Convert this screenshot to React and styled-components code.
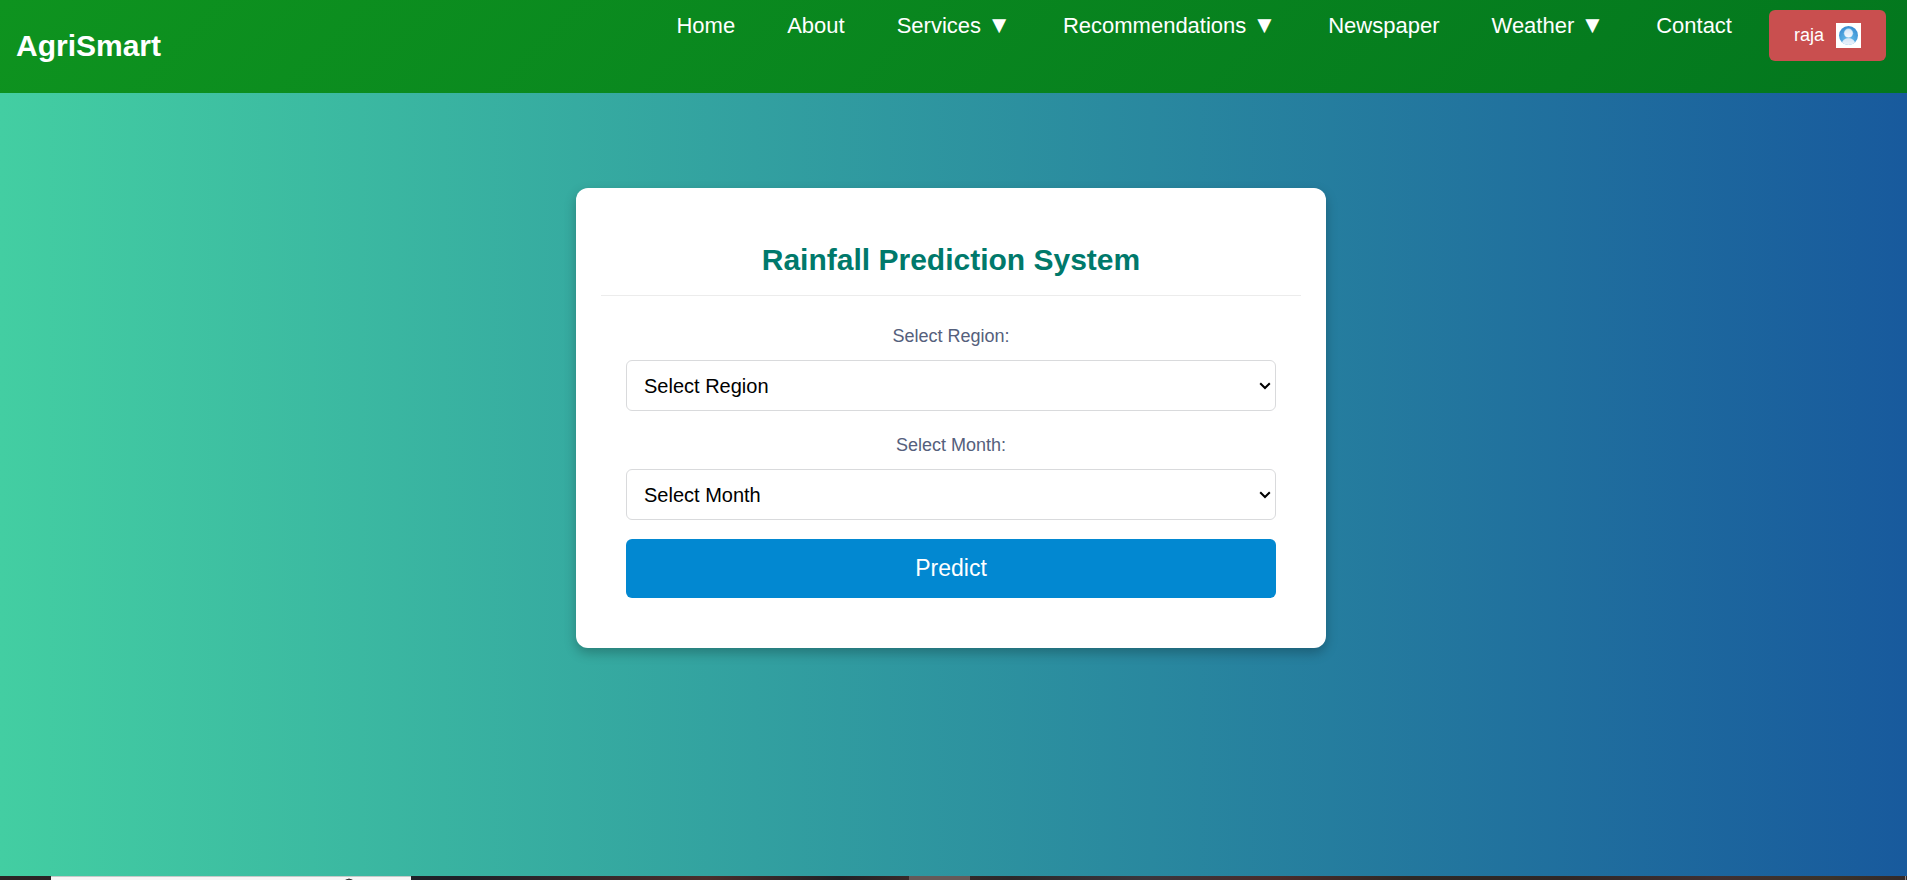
import React from "react";
import styled, { createGlobalStyle } from "styled-components";

const GlobalStyle = createGlobalStyle`
  *, *::before, *::after { box-sizing: border-box; }
  body {
    margin: 0;
    font-family: "Liberation Sans", Arial, "DejaVu Sans", sans-serif;
  }
`;

const Page = styled.div`
  display: flex;
  flex-direction: column;
  min-height: 100vh;
  background: linear-gradient(to right, #43cea2, #185a9d);
`;

const Header = styled.header`
  display: flex;
  align-items: flex-start;
  justify-content: space-between;
  min-height: 93px;
  padding: 10px 21px 12px 16px;
  background: linear-gradient(135deg, #0e931f, #03771e);
  color: #fff;
`;

const Brand = styled.a`
  align-self: center;
  color: inherit;
  font-size: 30px;
  font-weight: 700;
  line-height: 36px;
  text-decoration: none;
`;

const Nav = styled.nav`
  display: flex;
  align-items: flex-start;
  gap: 37px;
`;

const NavList = styled.ul`
  display: flex;
  gap: 52px;
  margin: 0;
  padding: 3px 0 0;
  list-style: none;
`;

const NavLink = styled.a`
  display: block;
  color: #fff;
  font-size: 22px;
  line-height: 26px;
  text-decoration: none;
  white-space: nowrap;
`;

const Arrow = styled.span`
  font-size: 24px;
  line-height: 20px;
`;

const UserButton = styled.button`
  display: flex;
  align-items: center;
  gap: 12px;
  height: 51px;
  padding: 0 25px;
  border: 0;
  border-radius: 6px;
  background: #c94f4f;
  color: #fff;
  font-family: inherit;
  font-size: 18px;
  cursor: pointer;
`;

const Main = styled.main`
  display: flex;
  flex: 1;
  align-items: flex-start;
  justify-content: center;
  padding: 95px 5px 95px 0;
`;

const Card = styled.section`
  width: 750px;
  max-width: 100%;
  padding: 50px 25px;
  border-radius: 12px;
  background: #fff;
  box-shadow: 0 5px 12px rgba(0, 0, 0, 0.25);
`;

const Title = styled.h1`
  margin: 0;
  padding: 4px 0 17px;
  border-bottom: 1px solid #ececec;
  color: #00796b;
  font-size: 30px;
  line-height: 36px;
  text-align: center;
`;

const Form = styled.form`
  display: flex;
  flex-direction: column;
  gap: 19px;
  padding: 25px 25px 0;
`;

const Field = styled.div`
  display: flex;
  flex-direction: column;
  gap: 12px;
`;

const Label = styled.label`
  padding-top: 3px;
  color: #55607c;
  font-size: 18px;
  line-height: 24px;
  text-align: center;
`;

const SelectBox = styled.div`
  position: relative;
  display: flex;
`;

const Select = styled.select`
  appearance: none;
  width: 100%;
  height: 51px;
  padding: 0 17px;
  border: 1px solid #d9dadc;
  border-radius: 6px;
  background: #fff;
  color: #000;
  font-family: inherit;
  font-size: 20px;
`;

const Chevron = styled.svg`
  position: absolute;
  top: 22px;
  right: 5px;
  pointer-events: none;
`;

const SubmitButton = styled.button`
  height: 59px;
  border: 0;
  border-radius: 6px;
  background: #0288d1;
  color: #fff;
  font-family: inherit;
  font-size: 23px;
  cursor: pointer;
`;

const Taskbar = styled.footer`
  display: flex;
  height: 4px;
  padding-left: 51px;
  background: linear-gradient(to right, #2b2425, #1d2128 24%, #4a2e2c 37%, #1f2226 44%, #3b2a29 48%, #2b292b 53%, #3a363d 60%, #4a2c2b 67%, #2d2926 74%, #2f2727 82%, #3f3032 90%, #3b332a 96%, #332a2b);
`;

const SearchEdge = styled.div`
  display: flex;
  justify-content: flex-end;
  width: 360px;
  padding-right: 57px;
  border-top: 1px solid #c5cac9;
  background: #f6f6f6;
`;

const ActiveEdge = styled.div`
  width: 61px;
  margin-left: 498px;
  background: #645a59;
`;

const DesktopEdge = styled.div`
  width: 1px;
  margin: 0 1px 0 auto;
  background: #8e8988;
`;

function Avatar() {
  return (
    <svg width="25" height="25" viewBox="0 0 25 25" aria-hidden="true">
      <defs>
        <radialGradient id="sky" cx="0.5" cy="0.75" r="0.7">
          <stop offset="0" stopColor="#69c1ed" />
          <stop offset="1" stopColor="#3a8fd3" />
        </radialGradient>
        <linearGradient id="person" x1="0" y1="0" x2="0" y2="1">
          <stop offset="0" stopColor="#d3e5f6" />
          <stop offset="1" stopColor="#f8fbfe" />
        </linearGradient>
        <clipPath id="disc">
          <circle cx="12.5" cy="12.5" r="9.5" />
        </clipPath>
      </defs>
      <rect width="25" height="25" fill="#fff" />
      <circle cx="12.5" cy="12.5" r="9.5" fill="url(#sky)" />
      <g clipPath="url(#disc)" fill="url(#person)">
        <ellipse cx="12.5" cy="20.5" rx="6.6" ry="5.4" />
        <circle cx="12.5" cy="10.2" r="4.6" stroke="#5aaee2" strokeWidth="0.4" />
      </g>
    </svg>
  );
}

const links = [
  { text: "Home" },
  { text: "About" },
  { text: "Services", menu: true },
  { text: "Recommendations", menu: true },
  { text: "Newspaper" },
  { text: "Weather", menu: true },
  { text: "Contact" },
];

const regions = ["North", "South", "East", "West"];
const months = [
  "January", "February", "March", "April", "May", "June",
  "July", "August", "September", "October", "November", "December",
];

function SelectField({ id, label, placeholder, options }) {
  return (
    <Field>
      <Label htmlFor={id}>{label}</Label>
      <SelectBox>
        <Select id={id} name={id} defaultValue="">
          <option value="">{placeholder}</option>
          {options.map((option) => (
            <option key={option} value={option}>{option}</option>
          ))}
        </Select>
        <Chevron width="12" height="8" viewBox="0 0 12 8" aria-hidden="true">
          <path d="M1.2 1.2L6 6L10.8 1.2" fill="none" stroke="#000" strokeWidth="2" />
        </Chevron>
      </SelectBox>
    </Field>
  );
}

export default function App() {
  return (
    <Page>
      <GlobalStyle />
      <Header>
        <Brand href="#">AgriSmart</Brand>
        <Nav>
          <NavList>
            {links.map(({ text, menu }) => (
              <li key={text}>
                <NavLink href="#">
                  {text}
                  {menu && <> <Arrow>▼</Arrow></>}
                </NavLink>
              </li>
            ))}
          </NavList>
          <UserButton type="button">
            raja
            <Avatar />
          </UserButton>
        </Nav>
      </Header>
      <Main>
        <Card>
          <Title>Rainfall Prediction System</Title>
          <Form onSubmit={(event) => event.preventDefault()}>
            <SelectField id="region" label="Select Region:" placeholder="Select Region" options={regions} />
            <SelectField id="month" label="Select Month:" placeholder="Select Month" options={months} />
            <SubmitButton type="submit">Predict</SubmitButton>
          </Form>
        </Card>
      </Main>
      <Taskbar>
        <SearchEdge>
          <svg width="10" height="3" viewBox="0 0 10 3" aria-hidden="true">
            <path d="M1 3.5Q5 0.5 9 3.5" fill="#333" stroke="#333" strokeWidth="1" />
          </svg>
        </SearchEdge>
        <ActiveEdge />
        <DesktopEdge />
      </Taskbar>
    </Page>
  );
}
